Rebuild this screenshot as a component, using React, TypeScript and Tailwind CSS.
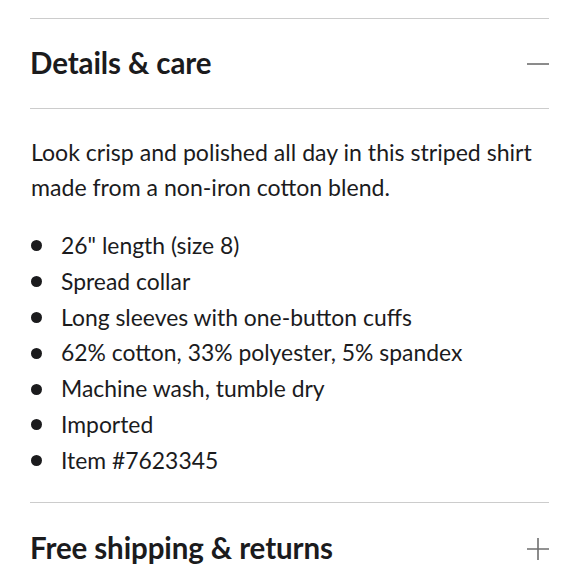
const bullets = [
  '26" length (size 8)',
  "Spread collar",
  "Long sleeves with one-button cuffs",
  "62% cotton, 33% polyester, 5% spandex",
  "Machine wash, tumble dry",
  "Imported",
  "Item #7623345",
];

function Minus() {
  return (
    <svg width="22" height="22" viewBox="0 0 22 22" className="text-[#6f6f6f]">
      <path d="M0 11h22" stroke="currentColor" strokeWidth="1.6" />
    </svg>
  );
}

function Plus() {
  return (
    <svg width="22" height="22" viewBox="0 0 22 22" className="text-[#6f6f6f]">
      <path d="M0 11h22M11 0v22" stroke="currentColor" strokeWidth="1.6" />
    </svg>
  );
}

export default function App() {
  return (
    <div
      className="w-[580px] h-[580px] overflow-hidden bg-white text-[#1b1b1d]"
      style={{ fontFamily: "Lato, 'Open Sans', sans-serif" }}
    >
      <div className="pl-[30px] pr-[31px] pt-[18px]">
        {/* Details & care */}
        <div className="border-t border-[#cccccc]" />
        <div className="h-[89px] flex items-center justify-between">
          <h2 className="text-[29.5px] font-bold tracking-[-0.1px]">Details &amp; care</h2>
          <Minus />
        </div>
        <div className="border-t border-[#cccccc]" />

        <p className="mt-[26px] text-[23.1px] leading-[35px] pl-px">
          Look crisp and polished all day in this striped shirt made from a non-iron cotton blend.
        </p>

        <ul className="mt-[23px] text-[22.9px] leading-[35.8px]">
          {bullets.map((b) => (
            <li key={b} className="flex items-center">
              <span className="w-[11px] h-[11px] rounded-full bg-[#1b1b1d] ml-[1px] mr-[19px] shrink-0" />
              <span>{b}</span>
            </li>
          ))}
        </ul>

        {/* Free shipping & returns */}
        <div className="mt-[23px] border-t border-[#cccccc]" />
        <div className="h-[92px] flex items-center justify-between">
          <h2 className="text-[29.5px] font-bold tracking-[-0.1px]">Free shipping &amp; returns</h2>
          <Plus />
        </div>
      </div>
    </div>
  );
}
